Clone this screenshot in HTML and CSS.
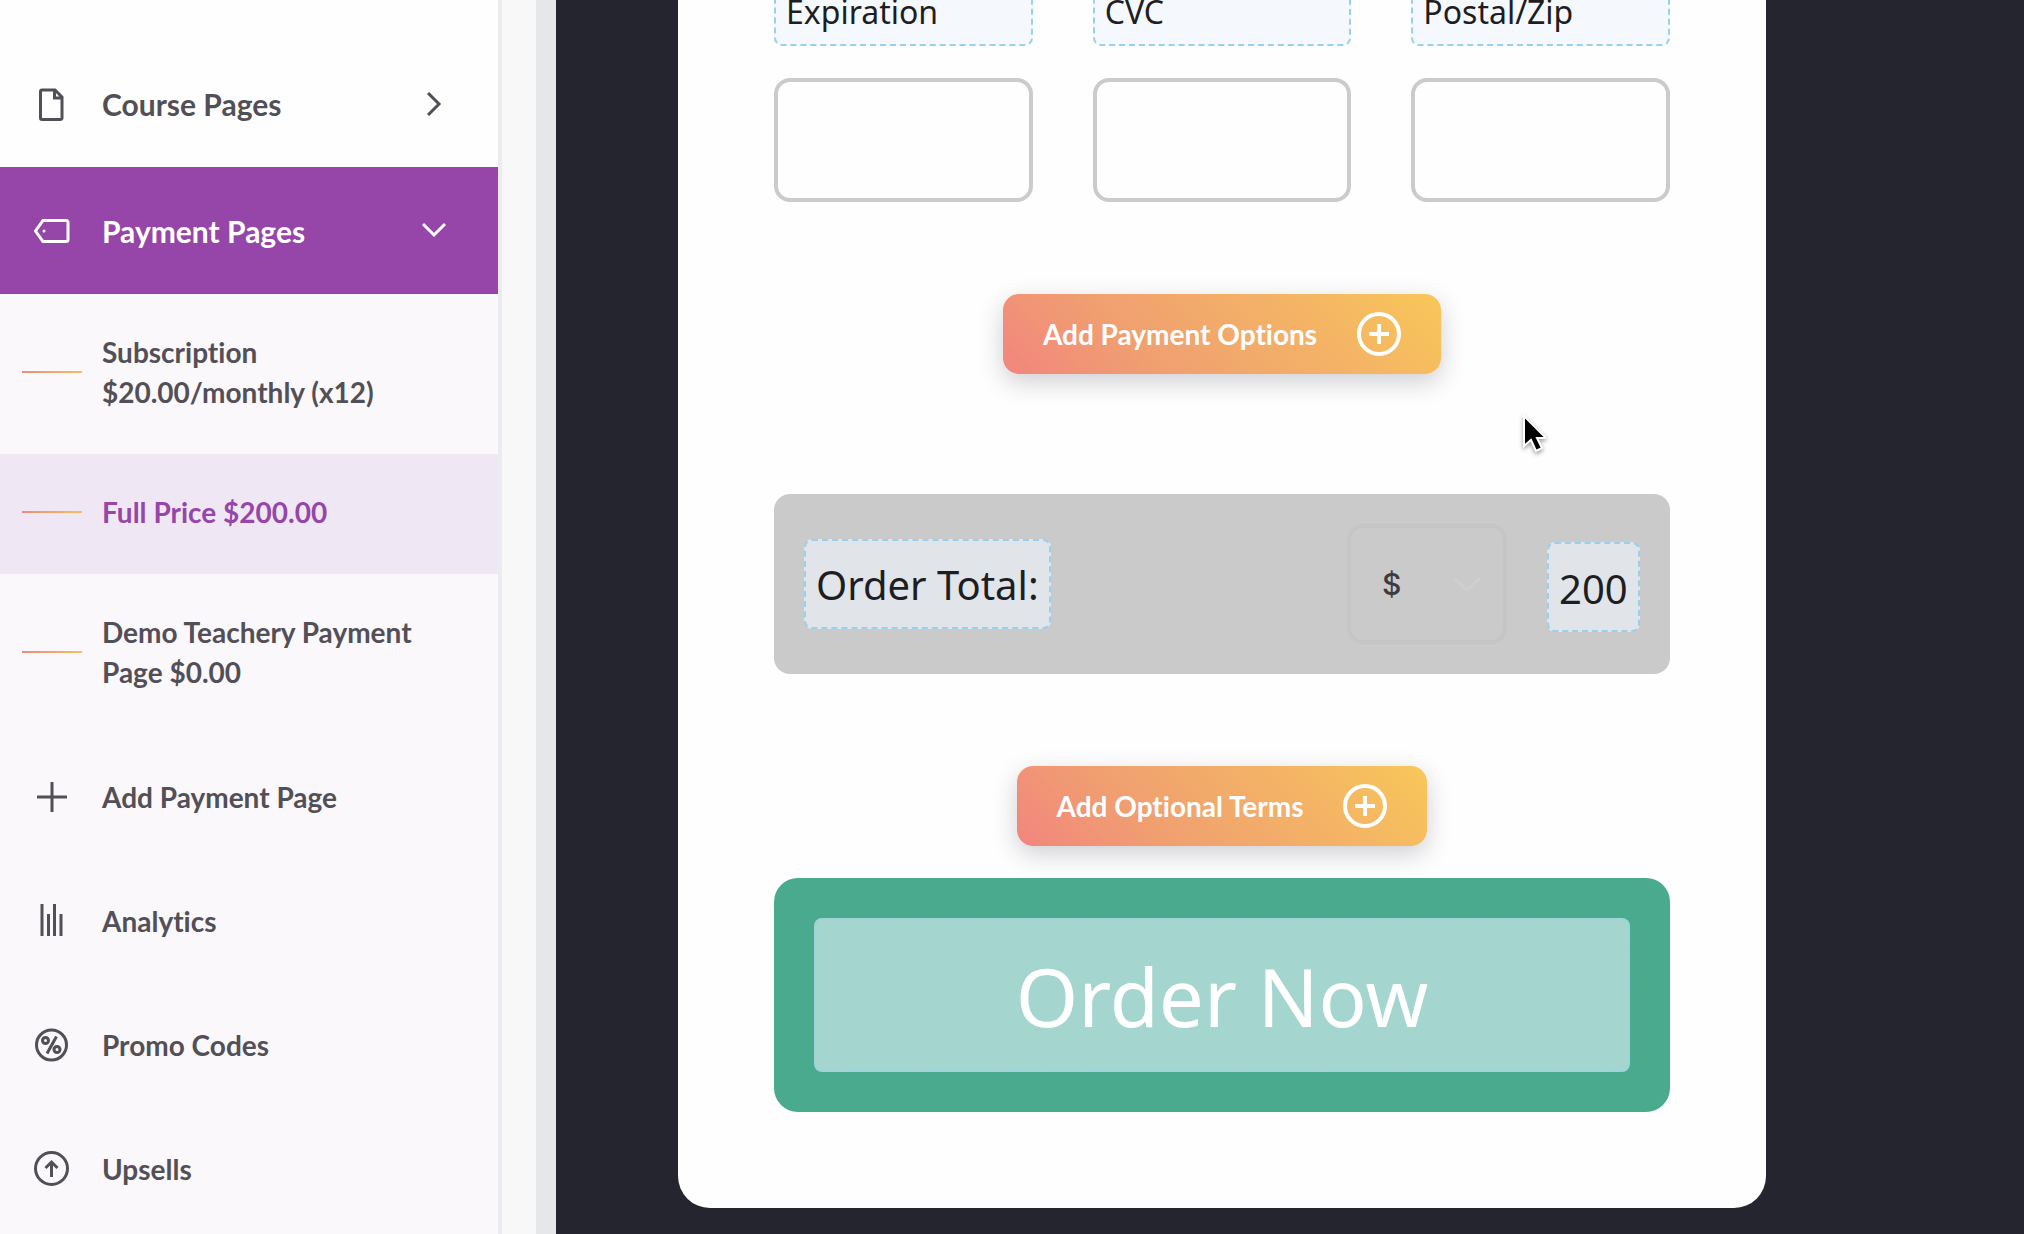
FILE: index.html
```html
<!DOCTYPE html>
<html lang="en">
<head>
<meta charset="utf-8">
<meta name="viewport" content="width=device-width, initial-scale=1">
<title>Payment Pages</title>
<link rel="stylesheet" href="styles.css">
</head>
<body>
<div class="app">
  <nav class="sidebar">
    <a class="nav-item" href="#course">
      <svg class="icon" viewBox="0 0 36 36"><path d="M8 4h13l7 7v21a1.500 1.500 0 0 1-1.500 1.500h-18.500a1.500 1.500 0 0 1-1.500-1.500v-26.500a1.500 1.500 0 0 1 1.500-1.500zM20.500 4v8h7.500"/></svg>
      <span>Course Pages</span>
      <svg class="chevron" viewBox="0 0 24 24"><path d="M6 1l11 11-11 11"/></svg>
    </a>
    <a class="nav-item nav-item-active" href="#payment">
      <svg class="icon" viewBox="0 0 36 36"><path d="M9 7.500h23a2 2 0 0 1 2 2v17a2 2 0 0 1-2 2h-23l-7.500-10.500z"/><circle class="dot" cx="10" cy="18" r="1.500"/></svg>
      <span>Payment Pages</span>
      <svg class="chevron" viewBox="0 0 24 24"><path d="M1 5l11 11 11-11"/></svg>
    </a>
    <div class="subnav">
      <a class="page-link" href="#subscription">Subscription $20.00/monthly (x12)</a>
      <a class="page-link page-link-current" href="#full-price">Full Price $200.00</a>
      <a class="page-link" href="#demo">Demo Teachery Payment Page $0.00</a>
      <a class="tool-link" href="#add">
        <svg class="icon" viewBox="0 0 36 36"><path d="M18 3v30M3 18h30"/></svg>
        <span>Add Payment Page</span>
      </a>
      <a class="tool-link" href="#analytics">
        <svg class="icon" viewBox="0 0 36 36"><path d="M8 1v32M14.500 11v22M20.500 1v32M27 11v22"/></svg>
        <span>Analytics</span>
      </a>
      <a class="tool-link" href="#promo">
        <svg class="icon" viewBox="0 0 36 36"><circle cx="17.500" cy="18" r="15"/><path d="M22.500 9.500l-9.500 17"/><circle cx="11.500" cy="13.500" r="3"/><circle cx="23" cy="22.500" r="3"/></svg>
        <span>Promo Codes</span>
      </a>
      <a class="tool-link" href="#upsells">
        <svg class="icon" viewBox="0 0 36 36"><circle cx="17.500" cy="17.500" r="16"/><path d="M17.500 26v-14.500M11.500 17l6-6 6 6"/></svg>
        <span>Upsells</span>
      </a>
    </div>
  </nav>
  <div class="gutter"></div>
  <main class="stage">
    <form class="card">
      <div class="fields">
        <div class="field"><label class="editable" for="expiration">Expiration</label><input class="box" id="expiration" type="text"></div>
        <div class="field"><label class="editable" for="cvc">CVC</label><input class="box" id="cvc" type="text"></div>
        <div class="field"><label class="editable" for="postal">Postal/Zip</label><input class="box" id="postal" type="text"></div>
      </div>
      <button class="add-button add-options" type="button">Add Payment Options
        <svg class="plus" viewBox="0 0 44 44"><circle cx="22" cy="22" r="20"/><path d="M22 12v20M12 22h20"/></svg>
      </button>
      <div class="total">
        <label class="editable editable-large" for="amount">Order Total:</label>
        <div class="currency">
          <select class="currency-select" aria-label="Currency"><option>$</option></select>
          <svg class="currency-arrow" viewBox="0 0 30 16"><path d="M2 2l13 12 13-12"/></svg>
        </div>
        <input class="editable editable-large amount" id="amount" type="text" value="200">
      </div>
      <button class="add-button" type="button">Add Optional Terms
        <svg class="plus" viewBox="0 0 44 44"><circle cx="22" cy="22" r="20"/><path d="M22 12v20M12 22h20"/></svg>
      </button>
      <button class="order" type="submit"><span class="order-label">Order Now</span></button>
    </form>
  </main>
  <svg class="cursor" viewBox="0 0 24 38"><path d="M2 2v30l7-6 5 11 6-3-5-10h9z"/></svg>
</div>
</body>
</html>
```

FILE: styles.css
```css
* { box-sizing: border-box; }

body {
  margin: 0;
  overflow: hidden;
  font-family: Lato, "Open Sans", sans-serif;
  font-variant-ligatures: none;
  color: #524f57;
}

.app {
  position: relative;
  display: flex;
  height: 100vh;
  overflow: hidden;
}

/* Sidebar */
.sidebar {
  display: flex;
  flex-direction: column;
  flex: 0 0 502px;
  padding-top: 40px;
  border-right: 4px solid #ececf0;
  background: #fefefe;
  font-size: 28px;
  font-weight: 700;
}

.sidebar a {
  color: inherit;
  text-decoration: none;
}

.nav-item,
.tool-link {
  display: flex;
  align-items: center;
  gap: 32px;
  padding: 0 52px 0 34px;
}

.nav-item {
  height: 127px;
  flex-shrink: 0;
  font-size: 30px;
}

.sidebar .nav-item-active {
  background: #9646a8;
  color: #fff;
}

.tool-link {
  height: 124px;
  padding-top: 2px;
}

.icon,
.chevron {
  flex: none;
  fill: none;
  stroke: currentColor;
  stroke-width: 3;
}

.icon { width: 36px; height: 36px; }
.icon .dot { fill: currentColor; stroke: none; }
.chevron { width: 24px; height: 24px; margin-left: auto; }

.subnav {
  flex: 1;
  background: #faf8fb;
}

.page-link {
  display: flex;
  align-items: center;
  gap: 20px;
  padding: 38px 80px 42px 22px;
  line-height: 40px;
}

.page-link::before {
  content: "";
  flex: 0 0 60px;
  height: 2px;
  background: linear-gradient(90deg, #ee8c7c, #f6bf5f);
}

.sidebar .page-link-current {
  background: #efe8f4;
  color: #9646a8;
}

.gutter {
  flex: 0 0 54px;
  border-right: 20px solid #e6e7e8;
  background: #f8f8f8;
}

/* Payment form */
.stage {
  flex: 1;
  padding: 0 258px 0 122px;
  background: #24252e;
}

.card {
  display: flex;
  flex-direction: column;
  align-items: center;
  margin-top: -64px;
  padding: 40px 96px 96px;
  border-radius: 32px;
  background: #fefefe;
}

.fields {
  display: grid;
  grid-template-columns: repeat(3, 1fr);
  gap: 60px;
  width: 100%;
}

.field {
  display: flex;
  flex-direction: column;
  gap: 32px;
  min-width: 0;
}

.editable {
  padding: 11px 10px 9px;
  border: 2px dashed #98d0ef;
  border-radius: 8px;
  background: #f5f9fd;
  color: #1e1d22;
  font-family: "Noto Sans", sans-serif;
  font-size: 32px;
  line-height: 46px;
}

.box {
  width: 100%;
  height: 124px;
  padding: 0 24px;
  border: 4px solid #cbcbcc;
  border-radius: 16px;
  background: #fefefe;
  font: 32px "Noto Sans", sans-serif;
}

.add-button {
  display: flex;
  align-items: center;
  gap: 40px;
  height: 80px;
  padding: 0 40px;
  border: 0;
  border-radius: 16px;
  background: linear-gradient(45deg, #f2857e, #f0a070 32%, #f4b366 68%, #f8c758);
  box-shadow: 0 8px 24px rgba(40, 38, 60, 0.22);
  color: #fff;
  font: 700 28px Lato, "Open Sans", sans-serif;
  font-variant-ligatures: none;
}

.add-options { margin-top: 92px; }

.plus {
  width: 44px;
  height: 44px;
  fill: none;
  stroke: #fff;
  stroke-width: 4;
}

.total {
  display: flex;
  align-items: center;
  width: 100%;
  height: 180px;
  margin: 120px 0 92px;
  padding: 0 30px;
  border-radius: 16px;
  background: #cacacb;
}

.editable-large {
  height: 90px;
  background: #e1e5e9;
  font-size: 40px;
  line-height: 66px;
}

.currency {
  position: relative;
  margin: 0 40px 0 auto;
}

.currency-select {
  display: block;
  width: 160px;
  height: 120px;
  padding: 0 31px;
  border: 4px solid #c5c5c5;
  border-radius: 16px;
  appearance: none;
  background: transparent;
  color: #3e3a41;
  font: 500 30px Inter, sans-serif;
}

.currency-arrow {
  position: absolute;
  top: 52px;
  right: 25px;
  width: 30px;
  height: 16px;
  fill: none;
  stroke: #cfcfd0;
  stroke-width: 3;
  pointer-events: none;
}

.amount {
  width: 93px;
  margin-top: 6px;
}

.order {
  width: 100%;
  margin-top: 32px;
  padding: 40px;
  border: 0;
  border-radius: 24px;
  background: #49aa8e;
  color: #fff;
  font: 80px "Noto Sans", sans-serif;
}

.order-label {
  display: block;
  padding: 21px 0 19px;
  border: 2px dashed #9bd3e3;
  border-radius: 8px;
  background: #a4d6cf;
  line-height: 110px;
}

/* Mouse pointer floating over the form */
.cursor {
  position: absolute;
  top: 414px;
  left: 1522px;
  width: 24px;
  height: 38px;
  fill: #000;
  stroke: #fff;
  stroke-width: 2;
  filter: drop-shadow(0 2px 2px rgba(0, 0, 0, 0.4));
}
```
